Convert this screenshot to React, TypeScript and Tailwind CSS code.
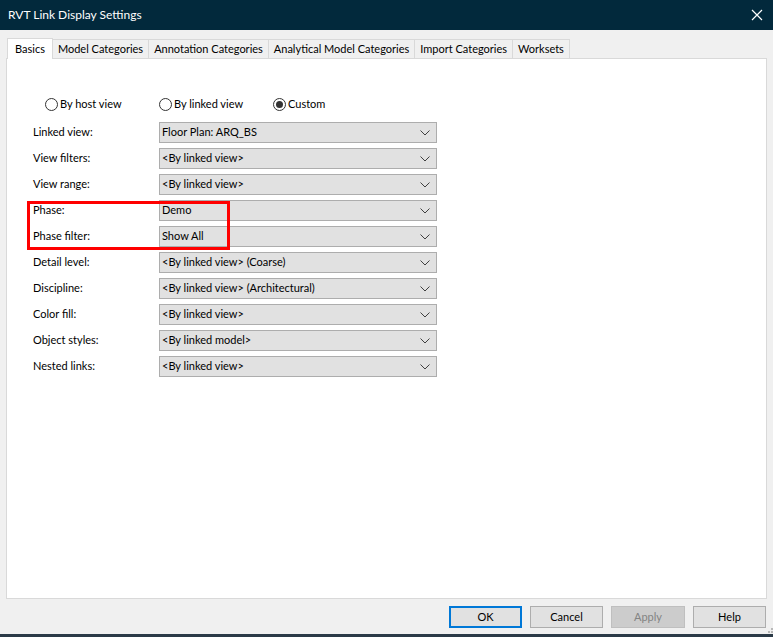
import React, { useState } from 'react';

const tabs = [
  'Basics',
  'Model Categories',
  'Annotation Categories',
  'Analytical Model Categories',
  'Import Categories',
  'Worksets',
];

const rows = [
  { label: 'Linked view:', value: 'Floor Plan: ARQ_BS' },
  { label: 'View filters:', value: '<By linked view>' },
  { label: 'View range:', value: '<By linked view>' },
  { label: 'Phase:', value: 'Demo' },
  { label: 'Phase filter:', value: 'Show All' },
  { label: 'Detail level:', value: '<By linked view> (Coarse)' },
  { label: 'Discipline:', value: '<By linked view> (Architectural)' },
  { label: 'Color fill:', value: '<By linked view>' },
  { label: 'Object styles:', value: '<By linked model>' },
  { label: 'Nested links:', value: '<By linked view>' },
];

function Chevron() {
  return (
    <svg width="10" height="6" viewBox="0 0 10 6" className="text-[#404040]">
      <path d="M0.5 0.5 L5 5 L9.5 0.5" fill="none" stroke="currentColor" strokeWidth="1" />
    </svg>
  );
}

function Radio({ label, checked, onClick }: { label: string; checked: boolean; onClick: () => void }) {
  return (
    <button onClick={onClick} className="flex items-center gap-[2px] text-[11px] text-black">
      <span className="w-[13px] h-[13px] rounded-full border border-[#333] bg-white flex items-center justify-center">
        {checked && <span className="w-[7px] h-[7px] rounded-full bg-[#333]" />}
      </span>
      {label}
    </button>
  );
}

export default function App() {
  const [mode, setMode] = useState('custom');
  const [active, setActive] = useState(0);

  return (
    <div
      className="w-[773px] h-[637px] bg-[#f0f0f0] flex flex-col border-b-[3px] border-[#2b3a47] overflow-hidden"
      style={{ fontFamily: 'Lato, "Liberation Sans", sans-serif' }}
    >
      {/* Title bar */}
      <div className="h-[30px] bg-[#02293c] flex items-center justify-between pl-[8px] pr-[10px] shrink-0">
        <span className="text-white text-[12px]">RVT Link Display Settings</span>
        <svg width="12" height="12" viewBox="0 0 12 12">
          <path d="M1 1 L11 11 M11 1 L1 11" stroke="white" strokeWidth="1.2" />
        </svg>
      </div>

      {/* Tabs */}
      <div className="flex items-end pl-[7px] pt-[7px] h-[28px] shrink-0">
        {tabs.map((t, i) =>
          i === active ? (
            <button
              key={t}
              onClick={() => setActive(i)}
              className="h-[21px] px-[7px] bg-white border border-b-0 border-[#d9d9d9] text-[11px] text-black leading-[18px] relative z-10 -mb-px"
            >
              {t}
            </button>
          ) : (
            <button
              key={t}
              onClick={() => setActive(i)}
              className="h-[19px] px-[5px] bg-[#f0f0f0] border border-b-0 border-l-0 border-[#d9d9d9] text-[11px] text-black leading-[18px]"
            >
              {t}
            </button>
          )
        )}
      </div>

      {/* Panel */}
      <div className="mx-[6px] h-[541px] bg-white border border-[#d9d9d9] shrink-0 pt-[36px] pl-[26px]">
        <div className="flex items-center h-[18px] pl-[12px]">
          <div className="w-[114px]">
            <Radio label="By host view" checked={mode === 'host'} onClick={() => setMode('host')} />
          </div>
          <div className="w-[114px]">
            <Radio label="By linked view" checked={mode === 'linked'} onClick={() => setMode('linked')} />
          </div>
          <Radio label="Custom" checked={mode === 'custom'} onClick={() => setMode('custom')} />
        </div>

        <div className="relative mt-[9px] flex flex-col gap-[5px]">
          <div className="absolute left-[-6px] top-[79px] w-[203px] h-[49px] border-[3px] border-[#ff0000] pointer-events-none z-10" />
          {rows.map((r) => (
            <div key={r.label} className="flex items-center h-[21px]">
              <span className="w-[126px] text-[11px] text-black">{r.label}</span>
              <div className="w-[278px] h-[21px] bg-[#e1e1e1] border border-[#adadad] flex items-center justify-between pl-[2px] pr-[6px]">
                <span className="text-[11px] text-black">{r.value}</span>
                <Chevron />
              </div>
            </div>
          ))}
        </div>
      </div>

      {/* Buttons */}
      <div className="flex justify-end gap-[8px] pr-[7px] pt-[7px] relative">
        <button className="w-[73px] h-[22px] bg-[#e1e1e1] border-2 border-[#0078d7] text-[11px] text-black">OK</button>
        <button className="w-[73px] h-[22px] bg-[#e1e1e1] border border-[#adadad] text-[11px] text-black">Cancel</button>
        <button className="w-[74px] h-[22px] bg-[#cccccc] border border-[#bfbfbf] text-[11px] text-[#838383]">Apply</button>
        <button className="w-[73px] h-[22px] bg-[#e1e1e1] border border-[#adadad] text-[11px] text-black">Help</button>
        <svg width="10" height="10" viewBox="0 0 10 10" className="absolute right-[0px] bottom-[-8px]">
          <rect x="8" y="2" width="2" height="2" fill="#b8b8b8" />
          <rect x="5" y="5" width="2" height="2" fill="#b8b8b8" />
          <rect x="8" y="5" width="2" height="2" fill="#b8b8b8" />
          <rect x="2" y="8" width="2" height="2" fill="#b8b8b8" />
          <rect x="5" y="8" width="2" height="2" fill="#b8b8b8" />
          <rect x="8" y="8" width="2" height="2" fill="#b8b8b8" />
        </svg>
      </div>
    </div>
  );
}
